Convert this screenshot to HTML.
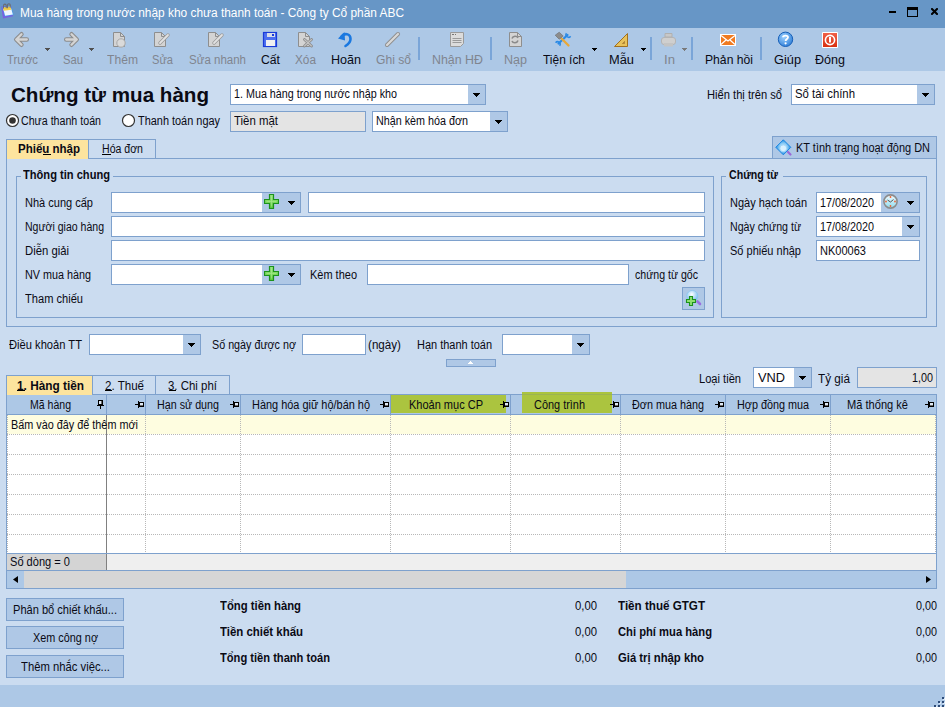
<!DOCTYPE html>
<html><head><meta charset="utf-8"><title>Mua hàng</title>
<style>
html,body{margin:0;padding:0;width:945px;height:707px;overflow:hidden;background:#cbdcf0;font-family:'Liberation Sans', sans-serif}
.a{position:absolute;box-sizing:border-box}
.t{white-space:nowrap}
.dh{height:1px;background-image:linear-gradient(to right,#b8b8b8 50%,transparent 50%);background-size:2px 1px}
.dv{width:1px;background-image:linear-gradient(to bottom,#b8b8b8 50%,transparent 50%);background-size:1px 2px}
</style></head><body>
<div class="a" style="left:0px;top:0px;width:945px;height:28px;background:#6796c6;"></div><div class="a" style="left:889px;top:11px;width:7px;height:2px;background:#000;"></div><div class="a" style="left:907px;top:7px;width:11px;height:10px;box-sizing:border-box;border:1px solid #000;border-top-width:3px"></div><svg class="a" style="left:931px;top:8px" width="7" height="7" viewBox="0 0 7 7"><path d="M1 1L6 6M6 1L1 6" stroke="#000" stroke-width="2" stroke-linecap="square"/></svg><svg class="a" style="left:0px;top:0px" width="20" height="22" viewBox="0 0 20 22"><path d="M1.3 6.5L3 18.5L13 16.3L11.2 6Z" fill="#7a5ee0"/><path d="M2.3 7L10.8 6L13.6 14.8L4.8 16.4Z" fill="#3aa0f0"/><path d="M2.9 7.5L10.5 6.6L12.9 14.4L5.1 15.8Z" fill="#eef5ff"/><path d="M2.9 7.5L10.5 6.6L11.3 9.8L3.7 10.8Z" fill="#f6cf48"/><path d="M3.6 8.6V5.4A1.3 1.3 0 0 1 6.2 5.4V8.2M7.6 8.2V5A1.3 1.3 0 0 1 10.2 5V7.8" stroke="#6a6a72" stroke-width="1.1" fill="none"/></svg><div class="a" style="left:0px;top:28px;width:945px;height:43px;background:#adc8e6;"></div><div class="a" style="left:418px;top:37px;width:2px;height:23px;background:#7aa5d8;"></div><div class="a" style="left:490px;top:37px;width:2px;height:23px;background:#7aa5d8;"></div><div class="a" style="left:650px;top:37px;width:2px;height:23px;background:#7aa5d8;"></div><div class="a" style="left:691px;top:37px;width:2px;height:23px;background:#7aa5d8;"></div><div class="a" style="left:760px;top:37px;width:2px;height:23px;background:#7aa5d8;"></div><svg class="a" style="left:0;top:0" width="945" height="71" viewBox="0 0 945 71"><path d="M21.5 34.2L16.2 39.5L21.5 44.8M16.7 39.5H26.8" stroke="#8c8c8c" stroke-width="4.4" stroke-linecap="round" stroke-linejoin="round" fill="none"/><path d="M21.5 34.2L16.2 39.5L21.5 44.8M16.7 39.5H26.8" stroke="#d4d4d4" stroke-width="2.3" stroke-linecap="round" stroke-linejoin="round" fill="none"/><path d="M71.5 34.2L76.8 39.5L71.5 44.8M76.3 39.5H66.2" stroke="#8c8c8c" stroke-width="4.4" stroke-linecap="round" stroke-linejoin="round" fill="none"/><path d="M71.5 34.2L76.8 39.5L71.5 44.8M76.3 39.5H66.2" stroke="#d4d4d4" stroke-width="2.3" stroke-linecap="round" stroke-linejoin="round" fill="none"/><path d="M113.5 32.5H120.5L124.5 36.5V46.5H113.5Z" fill="#d4d4d4" stroke="#8e8e8e" stroke-width="1"/><path d="M120.5 32.5V36.5H124.5" fill="none" stroke="#8e8e8e" stroke-width="1"/><circle cx="121" cy="43" r="4.2" fill="#dadada" stroke="#a8a8a8" stroke-width="1"/><path d="M154.5 32.5H161.5L165.5 36.5V46.5H154.5Z" fill="#d4d4d4" stroke="#8e8e8e" stroke-width="1"/><path d="M161.5 32.5V36.5H165.5" fill="none" stroke="#8e8e8e" stroke-width="1"/><path d="M160 43L168 35" stroke="#9a9a9a" stroke-width="3.4" stroke-linecap="round"/><path d="M160 43L168 35" stroke="#e2e2e2" stroke-width="1.8" stroke-linecap="round"/><path d="M208.5 32.5H215.5L219.5 36.5V46.5H208.5Z" fill="#d4d4d4" stroke="#8e8e8e" stroke-width="1"/><path d="M215.5 32.5V36.5H219.5" fill="none" stroke="#8e8e8e" stroke-width="1"/><path d="M214 43L222 35" stroke="#9a9a9a" stroke-width="3.4" stroke-linecap="round"/><path d="M214 43L222 35" stroke="#e2e2e2" stroke-width="1.8" stroke-linecap="round"/><rect x="263.5" y="32.5" width="13" height="14" fill="#4d6ff0" stroke="#1a3ad8" stroke-width="1.2"/><rect x="267" y="33" width="8" height="4" fill="#d8dce8"/><rect x="272" y="34" width="2" height="2" fill="#1a3ad8"/><rect x="266" y="40" width="9" height="6" fill="#f0f0f0"/><path d="M298.5 32.5H305.5L309.5 36.5V46.5H298.5Z" fill="#d4d4d4" stroke="#8e8e8e" stroke-width="1"/><path d="M305.5 32.5V36.5H309.5" fill="none" stroke="#8e8e8e" stroke-width="1"/><path d="M304.5 39.5L311.5 46M311.5 39.5L304.5 46" stroke="#8a8a8a" stroke-width="2.8" stroke-linecap="round"/><path d="M304.5 39.5L311.5 46M311.5 39.5L304.5 46" stroke="#c4c4c4" stroke-width="1.1" stroke-linecap="round"/><path d="M341.5 36.5C344 33 350.5 33 350.5 39C350.5 42 348 44.5 345.5 46" stroke="#1a78e0" stroke-width="2.6" fill="none" stroke-linecap="round"/><path d="M338 38.5L344.5 32L345 40.5Z" fill="#1a78e0"/><path d="M387 45L398 34" stroke="#8e8e8e" stroke-width="4" stroke-linecap="round"/><path d="M387 45L398 34" stroke="#d8d8d8" stroke-width="2.2" stroke-linecap="round"/><path d="M450.5 32.5H463.5V43.5L460.5 46.5H450.5Z" fill="#dcdcdc" stroke="#9a9a9a"/><path d="M452.5 38.5H461.5M452.5 40.5H461.5M452.5 42.5H461.5" stroke="#9a9a9a" stroke-width="1"/><path d="M452 34.5H454M455 34.5H456" stroke="#777"/><path d="M509.5 32.5H517.5L521.5 36.5V46.5H509.5Z" fill="#d4d4d4" stroke="#8e8e8e" stroke-width="1"/><path d="M517.5 32.5V36.5H521.5" fill="none" stroke="#8e8e8e" stroke-width="1"/><path d="M512 38.5C513 35.5 517 35.5 518 38M518 40.5C517 43.5 513 43.5 512 41" stroke="#8a8a8a" stroke-width="1.6" fill="none"/><path d="M558.5 43.5L567.5 35" stroke="#2a8ae6" stroke-width="2.2" stroke-linecap="round"/><path d="M566.5 33.2A2.3 2.3 0 1 0 570.6 36.2" fill="none" stroke="#2a8ae6" stroke-width="1.5"/><path d="M559.6 45.8A2.3 2.3 0 1 0 555.6 42.8" fill="none" stroke="#2a8ae6" stroke-width="1.5"/><path d="M561 38L568.5 45.5" stroke="#e8a838" stroke-width="2.3" stroke-linecap="round"/><path d="M555.2 35.2L559.2 32.2L563.2 36L559.2 39.2Z" fill="#8c8c8c" stroke="#6a6a6a" stroke-width="0.6"/><path d="M627.5 33.5V46.5H614.5Z" fill="#e8c25a" stroke="#a07020" stroke-width="1"/><path d="M624.5 41.5V43.5H622.5Z" fill="#fff4d0" stroke="#a07020" stroke-width="0.8"/><path d="M665 33.5H672V37H665Z" fill="#c8c8c8" stroke="#b0b0b0"/><rect x="661.5" y="37.5" width="14" height="7" rx="2.5" fill="#cfcfcf" stroke="#b4b4b4"/><rect x="664" y="43" width="9" height="3.5" fill="#c4c4c4"/><rect x="720" y="34" width="16" height="12" fill="#fff"/><rect x="721" y="35" width="14" height="10" fill="#f07a20"/><path d="M721 35.5L728 41L735 35.5M721 44.5L726 40M735 44.5L730 40" stroke="#fff" stroke-width="1.2" fill="none"/><defs><radialGradient id="gq" cx="0.4" cy="0.35" r="0.7"><stop offset="0" stop-color="#9cd0ff"/><stop offset="1" stop-color="#2f7fd8"/></radialGradient><linearGradient id="gr" x1="0" y1="0" x2="0" y2="1"><stop offset="0" stop-color="#f06048"/><stop offset="1" stop-color="#d83010"/></linearGradient></defs><circle cx="785.5" cy="39.3" r="7.2" fill="url(#gq)" stroke="#1860b8" stroke-width="1"/><path d="M783 37.2C783 35 788 35 788 37.3C788 39 785.6 39 785.6 41" stroke="#fff" stroke-width="1.8" fill="none"/><circle cx="785.6" cy="43.3" r="1.1" fill="#fff"/><rect x="822" y="32" width="16" height="16" fill="#fff" rx="1"/><rect x="823" y="33" width="14" height="14" fill="url(#gr)"/><circle cx="830" cy="40" r="4.6" fill="none" stroke="#fff" stroke-width="1.6"/><rect x="829" y="37" width="2" height="5.5" fill="#fff"/></svg><div class="a" style="left:45px;top:48px;width:5px;height:1px;background:#505050;"></div><div class="a" style="left:46px;top:49px;width:3px;height:1px;background:#505050;"></div><div class="a" style="left:47px;top:50px;width:1px;height:1px;background:#505050;"></div><div class="a" style="left:89px;top:48px;width:5px;height:1px;background:#505050;"></div><div class="a" style="left:90px;top:49px;width:3px;height:1px;background:#505050;"></div><div class="a" style="left:91px;top:50px;width:1px;height:1px;background:#505050;"></div><div class="a" style="left:592px;top:48px;width:5px;height:1px;background:#000;"></div><div class="a" style="left:593px;top:49px;width:3px;height:1px;background:#000;"></div><div class="a" style="left:594px;top:50px;width:1px;height:1px;background:#000;"></div><div class="a" style="left:641px;top:48px;width:5px;height:1px;background:#000;"></div><div class="a" style="left:642px;top:49px;width:3px;height:1px;background:#000;"></div><div class="a" style="left:643px;top:50px;width:1px;height:1px;background:#000;"></div><div class="a" style="left:682px;top:48px;width:5px;height:1px;background:#7a7a7a;"></div><div class="a" style="left:683px;top:49px;width:3px;height:1px;background:#7a7a7a;"></div><div class="a" style="left:684px;top:50px;width:1px;height:1px;background:#7a7a7a;"></div><div class="a" style="left:0px;top:71px;width:945px;height:614px;background:#cbdcf0;"></div><div class="a" style="left:0px;top:685px;width:945px;height:22px;background:#adc8e6;"></div><div class="a" style="left:230px;top:84px;width:256px;height:21px;background:#fff;box-shadow:inset 0 0 0 1px #7ea1cd;"></div><div class="a" style="left:468px;top:85px;width:17px;height:19px;background:#afc8e6;"></div><svg class="a" style="left:473px;top:93px" width="7" height="4" viewBox="0 0 7 4"><path shape-rendering="crispEdges" d="M0 0H7V1H6V2H5V3H4V4H3V3H2V2H1V1H0Z" fill="#000"/></svg><div class="a" style="left:791px;top:84px;width:144px;height:21px;background:#fff;box-shadow:inset 0 0 0 1px #7ea1cd;"></div><div class="a" style="left:917px;top:85px;width:17px;height:19px;background:#afc8e6;"></div><svg class="a" style="left:922px;top:93px" width="7" height="4" viewBox="0 0 7 4"><path shape-rendering="crispEdges" d="M0 0H7V1H6V2H5V3H4V4H3V3H2V2H1V1H0Z" fill="#000"/></svg><svg class="a" style="left:5px;top:113px" width="15" height="15" viewBox="0 0 15 15"><circle cx="7.5" cy="7.5" r="6" fill="#fff" stroke="#333" stroke-width="1.2"/><circle cx="7.5" cy="7.5" r="3.3" fill="#333"/></svg><svg class="a" style="left:121px;top:113px" width="15" height="15" viewBox="0 0 15 15"><circle cx="7.5" cy="7.5" r="6" fill="#fff" stroke="#333" stroke-width="1.2"/></svg><div class="a" style="left:230px;top:111px;width:136px;height:21px;background:#e4e4e4;box-shadow:inset 0 0 0 1px #7ea1cd;"></div><div class="a" style="left:372px;top:111px;width:136px;height:21px;background:#fff;box-shadow:inset 0 0 0 1px #7ea1cd;"></div><div class="a" style="left:490px;top:112px;width:17px;height:19px;background:#afc8e6;"></div><svg class="a" style="left:495px;top:120px" width="7" height="4" viewBox="0 0 7 4"><path shape-rendering="crispEdges" d="M0 0H7V1H6V2H5V3H4V4H3V3H2V2H1V1H0Z" fill="#000"/></svg><div class="a" style="left:6px;top:158px;width:931px;height:169px;background:#cbdcf0;box-shadow:inset 0 0 0 1px #7ea1cd;"></div><div class="a" style="left:6px;top:139px;width:83px;height:20px;background:#fde49e;box-shadow:inset 0 0 0 1px #7ea1cd;"></div><div class="a" style="left:88px;top:139px;width:68px;height:20px;background:#cbdcf0;box-shadow:inset 0 0 0 1px #7ea1cd;"></div><div class="a" style="left:7px;top:158px;width:81px;height:1px;background:#fde49e;"></div><div class="a" style="left:43px;top:154px;width:8px;height:1px;background:#000;"></div><div class="a" style="left:102px;top:154px;width:9px;height:1px;background:#000;"></div><div class="a" style="left:772px;top:136px;width:165px;height:23px;background:#afc8e6;box-shadow:inset 0 0 0 1px #7ea1cd;"></div><svg class="a" style="left:775px;top:139px" width="18" height="18" viewBox="0 0 18 18"><defs><radialGradient id="gk" cx="0.5" cy="0.5" r="0.5"><stop offset="0" stop-color="#e8f6ff"/><stop offset="0.6" stop-color="#7cc4f4"/><stop offset="1" stop-color="#1e88e0"/></radialGradient></defs><path d="M8.3 0.8L15.8 8.3L8.3 15.8L0.8 8.3Z" fill="url(#gk)" stroke="#1a86e2" stroke-width="1"/><circle cx="8.3" cy="9.3" r="3.4" fill="#d8f0ff" stroke="#9ad2f6" stroke-width="0.8"/><path d="M13 13L15.5 15.5" stroke="#9a6ad8" stroke-width="2.2" stroke-linecap="round"/></svg><div class="a" style="left:16px;top:176px;width:698px;height:142px;box-shadow:inset 0 0 0 1px #7ea1cd;"></div><div class="a" style="left:21px;top:168px;width:92px;height:13px;background:#cbdcf0;"></div><div class="a" style="left:721px;top:176px;width:206px;height:142px;box-shadow:inset 0 0 0 1px #7ea1cd;"></div><div class="a" style="left:726px;top:168px;width:57px;height:13px;background:#cbdcf0;"></div><div class="a" style="left:111px;top:192px;width:190px;height:21px;background:#fff;box-shadow:inset 0 0 0 1px #7ea1cd;"></div><div class="a" style="left:262px;top:193px;width:38px;height:19px;background:#afc8e6;"></div><svg class="a" style="left:264px;top:194px" width="15" height="15" viewBox="0 0 15 15"><defs><linearGradient id="gp192" x1="0" y1="0" x2="0" y2="1"><stop offset="0" stop-color="#9ce882"/><stop offset="1" stop-color="#5cc83c"/></linearGradient></defs><path d="M5.5 0.5H9.5V5.5H14.5V9.5H9.5V14.5H5.5V9.5H0.5V5.5H5.5Z" fill="url(#gp192)" stroke="#1c921c" stroke-width="1.2"/><path d="M7.5 2.5V12.5M2.5 7.5H12.5" stroke="#b8f0a0" stroke-width="0.8" opacity="0.6"/></svg><svg class="a" style="left:288px;top:201px" width="7" height="4" viewBox="0 0 7 4"><path shape-rendering="crispEdges" d="M0 0H7V1H6V2H5V3H4V4H3V3H2V2H1V1H0Z" fill="#000"/></svg><div class="a" style="left:308px;top:192px;width:397px;height:21px;background:#fff;box-shadow:inset 0 0 0 1px #7ea1cd;"></div><div class="a" style="left:111px;top:216px;width:594px;height:21px;background:#fff;box-shadow:inset 0 0 0 1px #7ea1cd;"></div><div class="a" style="left:111px;top:240px;width:594px;height:21px;background:#fff;box-shadow:inset 0 0 0 1px #7ea1cd;"></div><div class="a" style="left:111px;top:264px;width:190px;height:21px;background:#fff;box-shadow:inset 0 0 0 1px #7ea1cd;"></div><div class="a" style="left:262px;top:265px;width:38px;height:19px;background:#afc8e6;"></div><svg class="a" style="left:264px;top:266px" width="15" height="15" viewBox="0 0 15 15"><defs><linearGradient id="gp264" x1="0" y1="0" x2="0" y2="1"><stop offset="0" stop-color="#9ce882"/><stop offset="1" stop-color="#5cc83c"/></linearGradient></defs><path d="M5.5 0.5H9.5V5.5H14.5V9.5H9.5V14.5H5.5V9.5H0.5V5.5H5.5Z" fill="url(#gp264)" stroke="#1c921c" stroke-width="1.2"/><path d="M7.5 2.5V12.5M2.5 7.5H12.5" stroke="#b8f0a0" stroke-width="0.8" opacity="0.6"/></svg><svg class="a" style="left:288px;top:273px" width="7" height="4" viewBox="0 0 7 4"><path shape-rendering="crispEdges" d="M0 0H7V1H6V2H5V3H4V4H3V3H2V2H1V1H0Z" fill="#000"/></svg><div class="a" style="left:367px;top:264px;width:262px;height:21px;background:#fff;box-shadow:inset 0 0 0 1px #7ea1cd;"></div><div class="a" style="left:682px;top:287px;width:23px;height:23px;background:#afc8e6;box-shadow:inset 0 0 0 1px #7ea1cd;"></div><svg class="a" style="left:682px;top:287px" width="23" height="23" viewBox="0 0 23 23"><defs><radialGradient id="gm" cx="0.45" cy="0.35" r="0.6"><stop offset="0" stop-color="#ffffff"/><stop offset="1" stop-color="#7cc0f0"/></radialGradient></defs><circle cx="10.3" cy="9" r="5.6" fill="url(#gm)" stroke="#8cc6ee" stroke-width="0.8"/><path d="M15.5 14.5L18 17" stroke="#9a70e0" stroke-width="2.6" stroke-linecap="round"/><path d="M7.5 9.5H10.5V12.5H13.5V15.5H10.5V18.5H7.5V15.5H4.5V12.5H7.5Z" fill="#8ee070" stroke="#1c921c" stroke-width="1.1"/></svg><div class="a" style="left:816px;top:192px;width:104px;height:21px;background:#fff;box-shadow:inset 0 0 0 1px #7ea1cd;"></div><div class="a" style="left:881px;top:193px;width:38px;height:19px;background:#afc8e6;"></div><svg class="a" style="left:882px;top:193px" width="17" height="17" viewBox="0 0 17 17"><defs><linearGradient id="gc" x1="0" y1="0" x2="0" y2="1"><stop offset="0" stop-color="#f2fbff"/><stop offset="1" stop-color="#8fdcef"/></linearGradient></defs><circle cx="8.5" cy="8.5" r="6.6" fill="url(#gc)" stroke="#8c8c8c" stroke-width="1.6"/><path d="M5.5 7L8.5 9L11.5 6.5" stroke="#555" stroke-width="1" fill="none"/><circle cx="8.5" cy="4" r="0.9" fill="#f06030"/><circle cx="8.5" cy="13" r="0.9" fill="#f06030"/><circle cx="4" cy="8.5" r="0.9" fill="#f06030"/><circle cx="13" cy="8.5" r="0.9" fill="#f06030"/></svg><svg class="a" style="left:907px;top:201px" width="7" height="4" viewBox="0 0 7 4"><path shape-rendering="crispEdges" d="M0 0H7V1H6V2H5V3H4V4H3V3H2V2H1V1H0Z" fill="#000"/></svg><div class="a" style="left:816px;top:216px;width:104px;height:21px;background:#fff;box-shadow:inset 0 0 0 1px #7ea1cd;"></div><div class="a" style="left:902px;top:217px;width:17px;height:19px;background:#afc8e6;"></div><svg class="a" style="left:907px;top:225px" width="7" height="4" viewBox="0 0 7 4"><path shape-rendering="crispEdges" d="M0 0H7V1H6V2H5V3H4V4H3V3H2V2H1V1H0Z" fill="#000"/></svg><div class="a" style="left:816px;top:240px;width:104px;height:21px;background:#fff;box-shadow:inset 0 0 0 1px #7ea1cd;"></div><div class="a" style="left:89px;top:334px;width:112px;height:21px;background:#fff;box-shadow:inset 0 0 0 1px #7ea1cd;"></div><div class="a" style="left:183px;top:335px;width:17px;height:19px;background:#afc8e6;"></div><svg class="a" style="left:188px;top:343px" width="7" height="4" viewBox="0 0 7 4"><path shape-rendering="crispEdges" d="M0 0H7V1H6V2H5V3H4V4H3V3H2V2H1V1H0Z" fill="#000"/></svg><div class="a" style="left:302px;top:334px;width:64px;height:21px;background:#fff;box-shadow:inset 0 0 0 1px #7ea1cd;"></div><div class="a" style="left:502px;top:334px;width:88px;height:21px;background:#fff;box-shadow:inset 0 0 0 1px #7ea1cd;"></div><div class="a" style="left:572px;top:335px;width:17px;height:19px;background:#afc8e6;"></div><svg class="a" style="left:577px;top:343px" width="7" height="4" viewBox="0 0 7 4"><path shape-rendering="crispEdges" d="M0 0H7V1H6V2H5V3H4V4H3V3H2V2H1V1H0Z" fill="#000"/></svg><div class="a" style="left:446px;top:359px;width:50px;height:8px;background:#afc8e6;box-shadow:inset 0 0 0 1px #7ea1cd;"></div><div class="a" style="left:470px;top:361px;width:1px;height:1px;background:#fff;"></div><div class="a" style="left:469px;top:362px;width:3px;height:1px;background:#fff;"></div><div class="a" style="left:468px;top:363px;width:5px;height:1px;background:#fff;"></div><div class="a" style="left:753px;top:367px;width:59px;height:21px;background:#fff;box-shadow:inset 0 0 0 1px #7ea1cd;"></div><div class="a" style="left:794px;top:368px;width:17px;height:19px;background:#afc8e6;"></div><svg class="a" style="left:799px;top:376px" width="7" height="4" viewBox="0 0 7 4"><path shape-rendering="crispEdges" d="M0 0H7V1H6V2H5V3H4V4H3V3H2V2H1V1H0Z" fill="#000"/></svg><div class="a" style="left:857px;top:367px;width:80px;height:21px;background:#e4e4e4;box-shadow:inset 0 0 0 1px #7ea1cd;"></div><div class="a" style="left:6px;top:375px;width:87px;height:20px;background:#fde49e;box-shadow:inset 0 0 0 1px #7ea1cd;"></div><div class="a" style="left:7px;top:394px;width:85px;height:1px;background:#fde49e;"></div><div class="a" style="left:92px;top:375px;width:64px;height:20px;background:#cbdcf0;box-shadow:inset 0 0 0 1px #7ea1cd;"></div><div class="a" style="left:155px;top:375px;width:75px;height:20px;background:#cbdcf0;box-shadow:inset 0 0 0 1px #7ea1cd;"></div><div class="a" style="left:17px;top:390px;width:8px;height:1px;background:#000;"></div><div class="a" style="left:105px;top:390px;width:7px;height:1px;background:#000;"></div><div class="a" style="left:169px;top:390px;width:7px;height:1px;background:#000;"></div><div class="a" style="left:6px;top:394px;width:931px;height:195px;background:#fff;box-shadow:inset 0 0 0 1px #7ea1cd;"></div><div class="a" style="left:7px;top:395px;width:929px;height:19px;background:#adc8e6;"></div><div class="a" style="left:92px;top:394px;width:845px;height:1px;background:#7ea1cd;"></div><div class="a" style="left:6px;top:414px;width:931px;height:1px;background:#7ea1cd;"></div><div class="a" style="left:7px;top:394px;width:85px;height:1px;background:#fde49e;"></div><div class="a" style="left:106px;top:395px;width:1px;height:19px;background:#7ea1cd;"></div><div class="a" style="left:145px;top:395px;width:1px;height:19px;background:#7ea1cd;"></div><div class="a" style="left:240px;top:395px;width:1px;height:19px;background:#7ea1cd;"></div><div class="a" style="left:390px;top:395px;width:1px;height:19px;background:#7ea1cd;"></div><div class="a" style="left:510px;top:395px;width:1px;height:19px;background:#7ea1cd;"></div><div class="a" style="left:620px;top:395px;width:1px;height:19px;background:#7ea1cd;"></div><div class="a" style="left:725px;top:395px;width:1px;height:19px;background:#7ea1cd;"></div><div class="a" style="left:830px;top:395px;width:1px;height:19px;background:#7ea1cd;"></div><div class="a" style="left:391px;top:395px;width:115px;height:18px;background:#abc43f;"></div><div class="a" style="left:522px;top:392px;width:90px;height:21px;background:#abc43f;"></div><div class="a" style="left:522px;top:394px;width:90px;height:1px;background:#9cb452;"></div><div class="a" style="left:7px;top:415px;width:929px;height:19px;background:#fefde0;"></div><div class="a dh" style="left:7px;top:434px;width:929px"></div><div class="a dh" style="left:7px;top:454px;width:929px"></div><div class="a dh" style="left:7px;top:474px;width:929px"></div><div class="a dh" style="left:7px;top:494px;width:929px"></div><div class="a dh" style="left:7px;top:514px;width:929px"></div><div class="a dh" style="left:7px;top:534px;width:929px"></div><div class="a dv" style="left:7px;top:415px;height:138px"></div><div class="a dv" style="left:145px;top:415px;height:138px"></div><div class="a dv" style="left:240px;top:415px;height:138px"></div><div class="a dv" style="left:390px;top:415px;height:138px"></div><div class="a dv" style="left:510px;top:415px;height:138px"></div><div class="a dv" style="left:620px;top:415px;height:138px"></div><div class="a dv" style="left:725px;top:415px;height:138px"></div><div class="a dv" style="left:830px;top:415px;height:138px"></div><div class="a dv" style="left:935px;top:415px;height:138px"></div><div class="a" style="left:106px;top:415px;width:1px;height:155px;background:#808080;"></div><div class="a" style="left:98px;top:400px;width:5px;height:5px;background:#dfe9f5;box-shadow:inset 0 0 0 1px #000;"></div><div class="a" style="left:101px;top:401px;width:1px;height:3px;background:#6a6a6a;"></div><div class="a" style="left:97px;top:405px;width:7px;height:1px;background:#000;"></div><div class="a" style="left:100px;top:406px;width:1px;height:3px;background:#000;"></div><div class="a" style="left:135px;top:404px;width:3px;height:1px;background:#000;"></div><div class="a" style="left:138px;top:401px;width:1px;height:7px;background:#000;"></div><div class="a" style="left:139px;top:402px;width:5px;height:5px;background:#dfe9f5;box-shadow:inset 0 0 0 1px #000;"></div><div class="a" style="left:140px;top:405px;width:3px;height:1px;background:#6a6a6a;"></div><div class="a" style="left:230px;top:404px;width:3px;height:1px;background:#000;"></div><div class="a" style="left:233px;top:401px;width:1px;height:7px;background:#000;"></div><div class="a" style="left:234px;top:402px;width:5px;height:5px;background:#dfe9f5;box-shadow:inset 0 0 0 1px #000;"></div><div class="a" style="left:235px;top:405px;width:3px;height:1px;background:#6a6a6a;"></div><div class="a" style="left:380px;top:404px;width:3px;height:1px;background:#000;"></div><div class="a" style="left:383px;top:401px;width:1px;height:7px;background:#000;"></div><div class="a" style="left:384px;top:402px;width:5px;height:5px;background:#dfe9f5;box-shadow:inset 0 0 0 1px #000;"></div><div class="a" style="left:385px;top:405px;width:3px;height:1px;background:#6a6a6a;"></div><div class="a" style="left:500px;top:404px;width:3px;height:1px;background:#000;"></div><div class="a" style="left:503px;top:401px;width:1px;height:7px;background:#000;"></div><div class="a" style="left:504px;top:402px;width:5px;height:5px;background:#dfe9f5;box-shadow:inset 0 0 0 1px #000;"></div><div class="a" style="left:505px;top:405px;width:3px;height:1px;background:#6a6a6a;"></div><div class="a" style="left:610px;top:404px;width:3px;height:1px;background:#000;"></div><div class="a" style="left:613px;top:401px;width:1px;height:7px;background:#000;"></div><div class="a" style="left:614px;top:402px;width:5px;height:5px;background:#dfe9f5;box-shadow:inset 0 0 0 1px #000;"></div><div class="a" style="left:615px;top:405px;width:3px;height:1px;background:#6a6a6a;"></div><div class="a" style="left:715px;top:404px;width:3px;height:1px;background:#000;"></div><div class="a" style="left:718px;top:401px;width:1px;height:7px;background:#000;"></div><div class="a" style="left:719px;top:402px;width:5px;height:5px;background:#dfe9f5;box-shadow:inset 0 0 0 1px #000;"></div><div class="a" style="left:720px;top:405px;width:3px;height:1px;background:#6a6a6a;"></div><div class="a" style="left:820px;top:404px;width:3px;height:1px;background:#000;"></div><div class="a" style="left:823px;top:401px;width:1px;height:7px;background:#000;"></div><div class="a" style="left:824px;top:402px;width:5px;height:5px;background:#dfe9f5;box-shadow:inset 0 0 0 1px #000;"></div><div class="a" style="left:825px;top:405px;width:3px;height:1px;background:#6a6a6a;"></div><div class="a" style="left:925px;top:404px;width:3px;height:1px;background:#000;"></div><div class="a" style="left:928px;top:401px;width:1px;height:7px;background:#000;"></div><div class="a" style="left:929px;top:402px;width:5px;height:5px;background:#dfe9f5;box-shadow:inset 0 0 0 1px #000;"></div><div class="a" style="left:930px;top:405px;width:3px;height:1px;background:#6a6a6a;"></div><div class="a" style="left:6px;top:553px;width:931px;height:18px;background:#efefef;box-shadow:inset 0 0 0 1px #7ea1cd;"></div><div class="a" style="left:7px;top:554px;width:99px;height:16px;background:#d4d4d4;"></div><div class="a" style="left:106px;top:554px;width:1px;height:16px;background:#808080;"></div><div class="a" style="left:6px;top:570px;width:931px;height:19px;background:#adc8e6;box-shadow:inset 0 0 0 1px #7ea1cd;"></div><div class="a" style="left:24px;top:571px;width:602px;height:17px;background:#d6d6d6;"></div><svg class="a" style="left:13px;top:576px" width="5" height="7" viewBox="0 0 5 7"><path d="M5 0V7L0 3.5Z" fill="#000"/></svg><svg class="a" style="left:926px;top:576px" width="5" height="7" viewBox="0 0 5 7"><path d="M0 0V7L5 3.5Z" fill="#000"/></svg><div class="a" style="left:6px;top:598px;width:118px;height:23px;background:#afc8e6;box-shadow:inset 0 0 0 1px #7ea1cd;"></div><div class="a" style="left:6px;top:626px;width:118px;height:23px;background:#afc8e6;box-shadow:inset 0 0 0 1px #7ea1cd;"></div><div class="a" style="left:6px;top:655px;width:118px;height:23px;background:#afc8e6;box-shadow:inset 0 0 0 1px #7ea1cd;"></div><div class="a" style="left:943px;top:698px;width:2px;height:2px;background:#dce9f7"></div><div class="a" style="left:942px;top:697px;width:2px;height:2px;background:#2d4b78"></div><div class="a" style="left:939px;top:702px;width:2px;height:2px;background:#dce9f7"></div><div class="a" style="left:938px;top:701px;width:2px;height:2px;background:#2d4b78"></div><div class="a" style="left:943px;top:702px;width:2px;height:2px;background:#dce9f7"></div><div class="a" style="left:942px;top:701px;width:2px;height:2px;background:#2d4b78"></div><div class="a" style="left:935px;top:706px;width:2px;height:2px;background:#dce9f7"></div><div class="a" style="left:934px;top:705px;width:2px;height:2px;background:#2d4b78"></div><div class="a" style="left:939px;top:706px;width:2px;height:2px;background:#dce9f7"></div><div class="a" style="left:938px;top:705px;width:2px;height:2px;background:#2d4b78"></div><div class="a" style="left:943px;top:706px;width:2px;height:2px;background:#dce9f7"></div><div class="a" style="left:942px;top:705px;width:2px;height:2px;background:#2d4b78"></div>
<div class="a t" style="left:20px;top:6px;font-size:12px;line-height:14px;color:#ffffff;transform:scaleX(0.9909);transform-origin:0 0">Mua hàng trong nước nhập kho chưa thanh toán - Công ty Cổ phần ABC</div><div class="a t" style="left:7px;top:53px;font-size:12px;line-height:14px;color:#80858f;transform:scaleX(0.9452);transform-origin:0 0">Trước</div><div class="a t" style="left:63px;top:53px;font-size:12px;line-height:14px;color:#80858f;transform:scaleX(0.9364);transform-origin:0 0">Sau</div><div class="a t" style="left:107px;top:53px;font-size:12px;line-height:14px;color:#80858f;transform:scaleX(1.0102);transform-origin:0 0">Thêm</div><div class="a t" style="left:152px;top:53px;font-size:12px;line-height:14px;color:#80858f;transform:scaleX(0.9243);transform-origin:0 0">Sửa</div><div class="a t" style="left:189px;top:53px;font-size:12px;line-height:14px;color:#80858f;transform:scaleX(0.9592);transform-origin:0 0">Sửa nhanh</div><div class="a t" style="left:261px;top:53px;font-size:12px;line-height:14px;color:#0a0a14;transform:scaleX(1.0167);transform-origin:0 0">Cất</div><div class="a t" style="left:295px;top:53px;font-size:12px;line-height:14px;color:#80858f;transform:scaleX(0.9832);transform-origin:0 0">Xóa</div><div class="a t" style="left:331px;top:53px;font-size:12px;line-height:14px;color:#0a0a14;transform:scaleX(1.0458);transform-origin:0 0">Hoãn</div><div class="a t" style="left:376px;top:53px;font-size:12px;line-height:14px;color:#80858f;transform:scaleX(1.0090);transform-origin:0 0">Ghi sổ</div><div class="a t" style="left:432px;top:53px;font-size:12px;line-height:14px;color:#80858f;transform:scaleX(1.0332);transform-origin:0 0">Nhận HĐ</div><div class="a t" style="left:504px;top:53px;font-size:12px;line-height:14px;color:#80858f;transform:scaleX(1.0447);transform-origin:0 0">Nạp</div><div class="a t" style="left:543px;top:53px;font-size:12px;line-height:14px;color:#0a0a14;transform:scaleX(0.9941);transform-origin:0 0">Tiện ích</div><div class="a t" style="left:609px;top:53px;font-size:12px;line-height:14px;color:#0a0a14;transform:scaleX(1.0710);transform-origin:0 0">Mẫu</div><div class="a t" style="left:664px;top:53px;font-size:12px;line-height:14px;color:#80858f;transform:scaleX(1.0983);transform-origin:0 0">In</div><div class="a t" style="left:705px;top:53px;font-size:12px;line-height:14px;color:#0a0a14;transform:scaleX(1.0132);transform-origin:0 0">Phản hồi</div><div class="a t" style="left:774px;top:53px;font-size:12px;line-height:14px;color:#0a0a14;transform:scaleX(1.0647);transform-origin:0 0">Giúp</div><div class="a t" style="left:815px;top:53px;font-size:12px;line-height:14px;color:#0a0a14;transform:scaleX(1.0458);transform-origin:0 0">Đóng</div><div class="a t" style="left:11px;top:83px;font-size:20.5px;line-height:24px;font-weight:bold;color:#0a0a14;transform:scaleX(1.0046);transform-origin:0 0">Chứng từ mua hàng</div><div class="a t" style="left:234px;top:87px;font-size:12px;line-height:14px;color:#0a0a14;transform:scaleX(0.8955);transform-origin:0 0">1. Mua hàng trong nước nhập kho</div><div class="a t" style="left:707px;top:88px;font-size:12px;line-height:14px;color:#0a0a14;transform:scaleX(0.9292);transform-origin:0 0">Hiển thị trên sổ</div><div class="a t" style="left:795px;top:87px;font-size:12px;line-height:14px;color:#0a0a14;transform:scaleX(0.9467);transform-origin:0 0">Sổ tài chính</div><div class="a t" style="left:21px;top:114px;font-size:12px;line-height:14px;color:#0a0a14;transform:scaleX(0.8878);transform-origin:0 0">Chưa thanh toán</div><div class="a t" style="left:138px;top:114px;font-size:12px;line-height:14px;color:#0a0a14;transform:scaleX(0.9103);transform-origin:0 0">Thanh toán ngay</div><div class="a t" style="left:234px;top:114px;font-size:12px;line-height:14px;color:#0a0a14;transform:scaleX(0.9514);transform-origin:0 0">Tiền mặt</div><div class="a t" style="left:376px;top:114px;font-size:12px;line-height:14px;color:#0a0a14;transform:scaleX(0.8966);transform-origin:0 0">Nhận kèm hóa đơn</div><div class="a t" style="left:18px;top:142px;font-size:12px;line-height:14px;font-weight:bold;color:#0a0a14;transform:scaleX(0.9587);transform-origin:0 0">Phiếu nhập</div><div class="a t" style="left:102px;top:142px;font-size:12px;line-height:14px;color:#0a0a14;transform:scaleX(0.8802);transform-origin:0 0">Hóa đơn</div><div class="a t" style="left:796px;top:141px;font-size:12px;line-height:14px;color:#0a0a14;transform:scaleX(0.9144);transform-origin:0 0">KT tình trạng hoạt động DN</div><div class="a t" style="left:23px;top:168px;font-size:12px;line-height:14px;font-weight:bold;color:#0a0a14;transform:scaleX(0.9257);transform-origin:0 0">Thông tin chung</div><div class="a t" style="left:729px;top:168px;font-size:12px;line-height:14px;font-weight:bold;color:#0a0a14;transform:scaleX(0.8849);transform-origin:0 0">Chứng từ</div><div class="a t" style="left:25px;top:196px;font-size:12px;line-height:14px;color:#0a0a14;transform:scaleX(0.9181);transform-origin:0 0">Nhà cung cấp</div><div class="a t" style="left:25px;top:220px;font-size:12px;line-height:14px;color:#0a0a14;transform:scaleX(0.8781);transform-origin:0 0">Người giao hàng</div><div class="a t" style="left:25px;top:244px;font-size:12px;line-height:14px;color:#0a0a14;transform:scaleX(0.9421);transform-origin:0 0">Diễn giải</div><div class="a t" style="left:25px;top:268px;font-size:12px;line-height:14px;color:#0a0a14;transform:scaleX(0.8993);transform-origin:0 0">NV mua hàng</div><div class="a t" style="left:25px;top:292px;font-size:12px;line-height:14px;color:#0a0a14;transform:scaleX(0.9250);transform-origin:0 0">Tham chiếu</div><div class="a t" style="left:310px;top:268px;font-size:12px;line-height:14px;color:#0a0a14;transform:scaleX(0.9148);transform-origin:0 0">Kèm theo</div><div class="a t" style="left:635px;top:268px;font-size:12px;line-height:14px;color:#0a0a14;transform:scaleX(0.8819);transform-origin:0 0">chứng từ gốc</div><div class="a t" style="left:730px;top:196px;font-size:12px;line-height:14px;color:#0a0a14;transform:scaleX(0.9160);transform-origin:0 0">Ngày hạch toán</div><div class="a t" style="left:730px;top:220px;font-size:12px;line-height:14px;color:#0a0a14;transform:scaleX(0.8863);transform-origin:0 0">Ngày chứng từ</div><div class="a t" style="left:730px;top:244px;font-size:12px;line-height:14px;color:#0a0a14;transform:scaleX(0.9172);transform-origin:0 0">Số phiếu nhập</div><div class="a t" style="left:820px;top:196px;font-size:12px;line-height:14px;color:#0a0a14;transform:scaleX(0.8991);transform-origin:0 0">17/08/2020</div><div class="a t" style="left:820px;top:220px;font-size:12px;line-height:14px;color:#0a0a14;transform:scaleX(0.8991);transform-origin:0 0">17/08/2020</div><div class="a t" style="left:820px;top:244px;font-size:12px;line-height:14px;color:#0a0a14;transform:scaleX(0.9191);transform-origin:0 0">NK00063</div><div class="a t" style="left:9px;top:338px;font-size:12px;line-height:14px;color:#0a0a14;transform:scaleX(0.9299);transform-origin:0 0">Điều khoản TT</div><div class="a t" style="left:212px;top:338px;font-size:12px;line-height:14px;color:#0a0a14;transform:scaleX(0.8953);transform-origin:0 0">Số ngày được nợ</div><div class="a t" style="left:368px;top:338px;font-size:12px;line-height:14px;color:#0a0a14;transform:scaleX(0.9701);transform-origin:0 0">(ngày)</div><div class="a t" style="left:417px;top:338px;font-size:12px;line-height:14px;color:#0a0a14;transform:scaleX(0.9138);transform-origin:0 0">Hạn thanh toán</div><div class="a t" style="left:699px;top:372px;font-size:12px;line-height:14px;color:#0a0a14;transform:scaleX(0.9256);transform-origin:0 0">Loại tiền</div><div class="a t" style="left:758px;top:371px;font-size:12px;line-height:14px;color:#0a0a14;transform:scaleX(1.0654);transform-origin:0 0">VND</div><div class="a t" style="left:818px;top:372px;font-size:12px;line-height:14px;color:#0a0a14;transform:scaleX(0.9790);transform-origin:0 0">Tỷ giá</div><div class="a t" style="left:912px;top:371px;font-size:12px;line-height:14px;color:#0a0a14;transform:scaleX(0.8990);transform-origin:0 0">1,00</div><div class="a t" style="left:17px;top:379px;font-size:12px;line-height:14px;font-weight:bold;color:#0a0a14;transform:scaleX(0.9851);transform-origin:0 0">1. Hàng tiền</div><div class="a t" style="left:105px;top:379px;font-size:12px;line-height:14px;color:#0a0a14;transform:scaleX(0.9633);transform-origin:0 0">2. Thuế</div><div class="a t" style="left:168px;top:379px;font-size:12px;line-height:14px;color:#0a0a14;transform:scaleX(0.9538);transform-origin:0 0">3. Chi phí</div><div class="a t" style="left:30px;top:398px;font-size:12px;line-height:14px;color:#0a0a14;transform:scaleX(0.8779);transform-origin:0 0">Mã hàng</div><div class="a t" style="left:157px;top:398px;font-size:12px;line-height:14px;color:#0a0a14;transform:scaleX(0.8931);transform-origin:0 0">Hạn sử dụng</div><div class="a t" style="left:252px;top:398px;font-size:12px;line-height:14px;color:#0a0a14;transform:scaleX(0.9114);transform-origin:0 0">Hàng hóa giữ hộ/bán hộ</div><div class="a t" style="left:409px;top:398px;font-size:12px;line-height:14px;color:#0a0a14;transform:scaleX(0.9168);transform-origin:0 0">Khoản mục CP</div><div class="a t" style="left:534px;top:398px;font-size:12px;line-height:14px;color:#0a0a14;transform:scaleX(0.9100);transform-origin:0 0">Công trình</div><div class="a t" style="left:632px;top:398px;font-size:12px;line-height:14px;color:#0a0a14;transform:scaleX(0.9009);transform-origin:0 0">Đơn mua hàng</div><div class="a t" style="left:737px;top:398px;font-size:12px;line-height:14px;color:#0a0a14;transform:scaleX(0.9009);transform-origin:0 0">Hợp đồng mua</div><div class="a t" style="left:847px;top:398px;font-size:12px;line-height:14px;color:#0a0a14;transform:scaleX(0.9236);transform-origin:0 0">Mã thống kê</div><div class="a t" style="left:11px;top:418px;font-size:12px;line-height:14px;color:#0a0a14;transform:scaleX(0.9032);transform-origin:0 0">Bấm vào đây để thêm mới</div><div class="a t" style="left:10px;top:555px;font-size:12px;line-height:14px;color:#0a0a14;transform:scaleX(0.9222);transform-origin:0 0">Số dòng = 0</div><div class="a t" style="left:13px;top:603px;font-size:12px;line-height:14px;color:#0a0a14;transform:scaleX(0.9224);transform-origin:0 0">Phân bổ chiết khấu...</div><div class="a t" style="left:33px;top:631px;font-size:12px;line-height:14px;color:#0a0a14;transform:scaleX(0.9040);transform-origin:0 0">Xem công nợ</div><div class="a t" style="left:21px;top:660px;font-size:12px;line-height:14px;color:#0a0a14;transform:scaleX(0.9396);transform-origin:0 0">Thêm nhắc việc...</div><div class="a t" style="left:220px;top:599px;font-size:12px;line-height:14px;font-weight:bold;color:#0a0a14;transform:scaleX(0.9419);transform-origin:0 0">Tổng tiền hàng</div><div class="a t" style="left:575px;top:599px;font-size:12px;line-height:14px;color:#0a0a14;transform:scaleX(0.9418);transform-origin:0 0">0,00</div><div class="a t" style="left:220px;top:625px;font-size:12px;line-height:14px;font-weight:bold;color:#0a0a14;transform:scaleX(0.9525);transform-origin:0 0">Tiền chiết khấu</div><div class="a t" style="left:575px;top:625px;font-size:12px;line-height:14px;color:#0a0a14;transform:scaleX(0.9418);transform-origin:0 0">0,00</div><div class="a t" style="left:220px;top:651px;font-size:12px;line-height:14px;font-weight:bold;color:#0a0a14;transform:scaleX(0.9270);transform-origin:0 0">Tổng tiền thanh toán</div><div class="a t" style="left:575px;top:651px;font-size:12px;line-height:14px;color:#0a0a14;transform:scaleX(0.9418);transform-origin:0 0">0,00</div><div class="a t" style="left:618px;top:599px;font-size:12px;line-height:14px;font-weight:bold;color:#0a0a14;transform:scaleX(0.9690);transform-origin:0 0">Tiền thuế GTGT</div><div class="a t" style="left:916px;top:599px;font-size:12px;line-height:14px;color:#0a0a14;transform:scaleX(0.8990);transform-origin:0 0">0,00</div><div class="a t" style="left:618px;top:625px;font-size:12px;line-height:14px;font-weight:bold;color:#0a0a14;transform:scaleX(0.9337);transform-origin:0 0">Chi phí mua hàng</div><div class="a t" style="left:916px;top:625px;font-size:12px;line-height:14px;color:#0a0a14;transform:scaleX(0.8990);transform-origin:0 0">0,00</div><div class="a t" style="left:618px;top:651px;font-size:12px;line-height:14px;font-weight:bold;color:#0a0a14;transform:scaleX(0.9415);transform-origin:0 0">Giá trị nhập kho</div><div class="a t" style="left:916px;top:651px;font-size:12px;line-height:14px;color:#0a0a14;transform:scaleX(0.8990);transform-origin:0 0">0,00</div>
</body></html>
